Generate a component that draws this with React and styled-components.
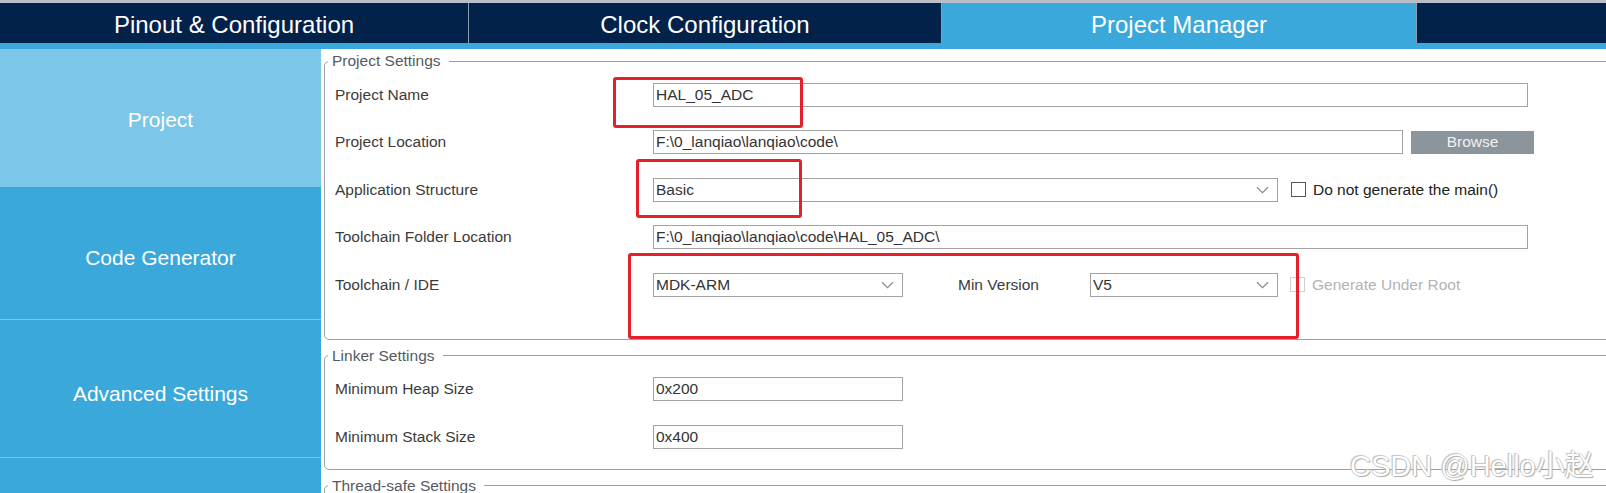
import styled, { createGlobalStyle } from "styled-components";

const GlobalStyle = createGlobalStyle`
  html, body {
    margin: 0;
    padding: 0;
    background: #ffffff;
  }
  body {
    font-family: "Liberation Sans", Arial, sans-serif;
  }
`;

const tabs = [
  { title: "Pinout & Configuration", width: 469 },
  { title: "Clock Configuration", width: 473 },
  { title: "Project Manager", width: 475, active: true },
  { title: "", width: 0 },
];

const navItems = [
  { title: "Project", height: 138, pad: 4, active: true },
  { title: "Code Generator", height: 133, pad: 10 },
  { title: "Advanced Settings", height: 138, pad: 10 },
  { title: "", height: 60, pad: 0 },
];

const Chevron = () => (
  <svg width="13" height="8" viewBox="0 0 13 8">
    <path d="M1 1.2 L6.5 6.6 L12 1.2" fill="none" stroke="#8a8a8a" strokeWidth="1.2" />
  </svg>
);

const App = () => {
  return (
    <Page>
      <GlobalStyle />
      <TabBar>
        {tabs.map((t, i) => (
          <Tab key={i} $width={t.width} $active={t.active}>
            {t.title}
          </Tab>
        ))}
      </TabBar>
      <Strip />
      <Body>
        <Sidebar>
          {navItems.map((n, i) => (
            <NavItem key={i} $height={n.height} $pad={n.pad} $active={n.active}>
              {n.title}
            </NavItem>
          ))}
        </Sidebar>
        <Main>
          <Group $bottom={30}>
            <Legend>Project Settings</Legend>
            <Row>
              <Label>Project Name</Label>
              <Field $width={875}>HAL_05_ADC</Field>
            </Row>
            <Row>
              <Label>Project Location</Label>
              <Field $width={750}>F:\0_lanqiao\lanqiao\code\</Field>
              <BrowseBtn>Browse</BrowseBtn>
            </Row>
            <Row>
              <Label>Application Structure</Label>
              <Field $width={625}>
                Basic
                <Chevron />
              </Field>
              <Check $gap={13} />
              <CheckLabel>Do not generate the main()</CheckLabel>
            </Row>
            <Row>
              <Label>Toolchain Folder Location</Label>
              <Field $width={875}>F:\0_lanqiao\lanqiao\code\HAL_05_ADC\</Field>
            </Row>
            <Row>
              <Label>Toolchain / IDE</Label>
              <Field $width={250}>
                MDK-ARM
                <Chevron />
              </Field>
              <MinLabel>Min Version</MinLabel>
              <Field $width={188}>
                V5
                <Chevron />
              </Field>
              <Check $gap={12} $disabled />
              <CheckLabel $disabled>Generate Under Root</CheckLabel>
            </Row>
          </Group>

          <Group $top={7} $bottom={8}>
            <Legend>Linker Settings</Legend>
            <Row>
              <Label>Minimum Heap Size</Label>
              <Field $width={250}>0x200</Field>
            </Row>
            <Row>
              <Label>Minimum Stack Size</Label>
              <Field $width={250}>0x400</Field>
            </Row>
          </Group>

          <Group $top={7} $bottom={40}>
            <Legend>Thread-safe Settings</Legend>
          </Group>
        </Main>
      </Body>

      <Mark $x={613} $y={77} $w={190} $h={51} />
      <Mark $x={636} $y={159} $w={166} $h={59} />
      <Mark $x={628} $y={253} $w={671} $h={86} />

      <Watermark>CSDN @Hello小赵</Watermark>
    </Page>
  );
};

const Page = styled.div`
  position: relative;
  width: 1606px;
  height: 493px;
  overflow: hidden;
  font-family: "Liberation Sans", Arial, "Noto Sans CJK SC", sans-serif;
`;

const TabBar = styled.div`
  display: flex;
  height: 40px;
  border-top: 3px solid #b9bec6;
  background-color: #03224a;
`;

const Tab = styled.div`
  flex: ${(p) => (p.$width ? `0 0 ${p.$width}px` : "1")};
  display: flex;
  align-items: center;
  justify-content: center;
  box-sizing: border-box;
  padding-top: 3px;
  border-right: 1px solid #8d9db3;
  background-color: ${(p) => (p.$active ? "#3aa8db" : "transparent")};
  color: #ffffff;
  font-size: 24px;
  &:last-child {
    border-right: none;
  }
`;

const Strip = styled.div`
  height: 6px;
  background-color: #3aa8db;
`;

const Body = styled.div`
  display: flex;
  height: 444px;
`;

const Sidebar = styled.div`
  width: 321px;
  flex-shrink: 0;
  display: flex;
  flex-direction: column;
  background-color: #3aa8db;
`;

const NavItem = styled.div`
  height: ${(p) => p.$height}px;
  flex-shrink: 0;
  box-sizing: border-box;
  display: flex;
  align-items: center;
  justify-content: center;
  padding-top: ${(p) => p.$pad}px;
  border-bottom: 1px solid #7fc4e6;
  background-color: ${(p) => (p.$active ? "#7cc6e9" : "#3aa8db")};
  color: #ffffff;
  font-size: 21px;
  &:first-child {
    border-bottom: none;
  }
`;

const Main = styled.div`
  flex: 1;
  min-width: 0;
  padding: 3px 0 0 3px;
  overflow: hidden;
  display: flex;
  flex-direction: column;
`;

const Group = styled.fieldset`
  margin: ${(p) => p.$top || 0}px -20px 0 0;
  padding: 1px 0 ${(p) => p.$bottom}px 10px;
  min-width: 0;
  border: 1px solid #98a0aa;
  border-radius: 5px;
  flex-shrink: 0;
`;

const Legend = styled.legend`
  margin-left: -7px;
  padding: 0 8px 0 4px;
  line-height: 18px;
  font-size: 15.5px;
  color: #555a60;
`;

const Row = styled.div`
  display: flex;
  align-items: center;
  height: 47.5px;
`;

const Label = styled.div`
  width: 318px;
  flex-shrink: 0;
  font-size: 15.5px;
  color: #3b3b3b;
`;

const Field = styled.div`
  width: ${(p) => p.$width}px;
  height: 24px;
  flex-shrink: 0;
  box-sizing: border-box;
  display: flex;
  align-items: center;
  justify-content: space-between;
  padding: 0 8px 0 2px;
  border: 1px solid #a3a3a3;
  font-size: 15.5px;
  color: #333333;
  white-space: nowrap;
`;

const BrowseBtn = styled.div`
  width: 123px;
  height: 23px;
  margin-left: 8px;
  display: flex;
  align-items: center;
  justify-content: center;
  background-color: #8c949c;
  color: #f2f2f2;
  font-size: 15.5px;
`;

const Check = styled.div`
  width: 15px;
  height: 15px;
  flex-shrink: 0;
  box-sizing: border-box;
  margin-left: ${(p) => p.$gap}px;
  border: 1.5px solid ${(p) => (p.$disabled ? "#cfcfcf" : "#555555")};
`;

const CheckLabel = styled.div`
  margin-left: 7px;
  font-size: 15.5px;
  color: ${(p) => (p.$disabled ? "#b3b3b3" : "#222222")};
  white-space: nowrap;
`;

const MinLabel = styled.div`
  width: 132px;
  margin-left: 55px;
  flex-shrink: 0;
  font-size: 15.5px;
  color: #3b3b3b;
`;

const Mark = styled.div`
  position: absolute;
  left: ${(p) => p.$x}px;
  top: ${(p) => p.$y}px;
  width: ${(p) => p.$w}px;
  height: ${(p) => p.$h}px;
  box-sizing: border-box;
  border: 3.5px solid #e4202b;
  border-radius: 3px;
  pointer-events: none;
`;

const Watermark = styled.div`
  position: absolute;
  left: 1350px;
  top: 452px;
  font-size: 29px;
  line-height: 1;
  color: #ffffff;
  white-space: nowrap;
  text-shadow: 0 0 1px #9a9a9a, 1px 1px 1px #b0b0b0, -1px -1px 1px #c8c8c8;
  font-family: "Liberation Sans", Arial, "Noto Sans CJK SC", sans-serif;
`;

export default App;
